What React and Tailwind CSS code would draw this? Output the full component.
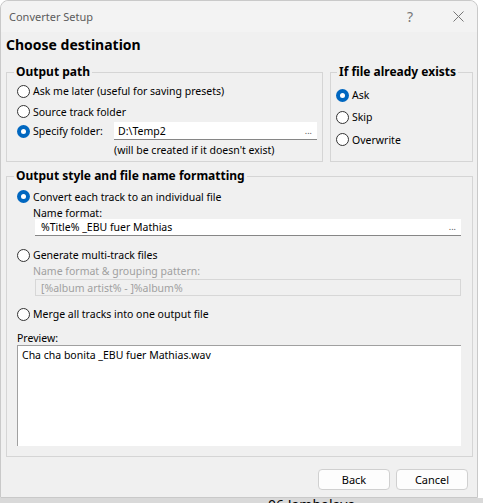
import React from "react";

function Radio({ checked }) {
  return (
    <span
      className={
        "relative inline-flex h-[13px] w-[13px] shrink-0 items-center justify-center rounded-full " +
        (checked ? "bg-[#0067c0]" : "border border-[#333] bg-white")
      }
    >
      {checked && <span className="h-[5px] w-[5px] rounded-full bg-white" />}
    </span>
  );
}

function RadioRow({ checked, children, className = "" }) {
  return (
    <div className={"flex items-center gap-[3px] " + className}>
      <Radio checked={checked} />
      <span>{children}</span>
    </div>
  );
}

export default function App() {
  return (
    <div
      className="relative h-[503px] w-[483px] overflow-hidden bg-[#ffffff] text-[10.5px] leading-[14px] text-black"
      style={{ fontFamily: '"Noto Sans", "Open Sans", sans-serif' }}
    >
      <div className="flex h-[498px] w-[478px] flex-col rounded-t-[8px] border border-[#c9c9c9] bg-[#f0f0f0]">
        {/* title bar */}
        <div className="flex h-[31px] items-center rounded-t-[8px] bg-[#f3f3f3] pl-[8px] text-[11px] text-[#5c5c5c]">
          <span>Converter Setup</span>
          <span className="ml-auto mr-[40px] text-[14px] text-[#777]">?</span>
          <svg width="11" height="11" viewBox="0 0 11 11" className="mr-[13px]">
            <path d="M0.5 0.5 L10.5 10.5 M10.5 0.5 L0.5 10.5" stroke="#777" strokeWidth="1" />
          </svg>
        </div>
        {/* header */}
        <div className="flex h-[26px] items-center pl-[5px] text-[14px] font-bold">Choose destination</div>

        <div className="mt-[5px] flex gap-[7px] pl-[5px]">
          <fieldset className="h-[99px] w-[317px] border border-[#d5d5d5] pl-[10px] pr-[5px]">
            <legend className="ml-[-3px] px-[2px] text-[12px] font-bold leading-[18px]">Output path</legend>
            <div className="flex h-[20px] items-center">
              <RadioRow>Ask me later (useful for saving presets)</RadioRow>
            </div>
            <div className="flex h-[21px] items-center">
              <RadioRow>Source track folder</RadioRow>
            </div>
            <div className="flex h-[18px] items-center">
              <RadioRow checked className="w-[97px]">Specify folder:</RadioRow>
              <div className="flex h-[18px] flex-1 items-center border-b border-[#868686] bg-white pl-[4px] pr-[5px]">
                <span>D:\Temp2</span>
                <span className="ml-auto text-[9px] text-[#555]">...</span>
              </div>
            </div>
            <div className="flex h-[20px] items-center pl-[97px]">(will be created if it doesn't exist)</div>
          </fieldset>

          <fieldset className="h-[99px] w-[143px] border border-[#d5d5d5] pl-[5px]">
            <legend className="ml-[1px] px-[2px] text-[12px] font-bold leading-[18px]">If file already exists</legend>
            <div className="mt-[3px] flex h-[22px] items-center">
              <RadioRow checked>Ask</RadioRow>
            </div>
            <div className="flex h-[22px] items-center">
              <RadioRow>Skip</RadioRow>
            </div>
            <div className="flex h-[23px] items-center">
              <RadioRow>Overwrite</RadioRow>
            </div>
          </fieldset>
        </div>

        <fieldset className="ml-[5px] mt-[5px] h-[290px] w-[467px] border border-[#d5d5d5] pl-[10px] pr-[11px]">
          <legend className="ml-[-3px] px-[2px] text-[12px] font-bold leading-[18px]">Output style and file name formatting</legend>
          <div className="flex h-[21px] items-center pt-[2px]">
            <RadioRow checked>Convert each track to an individual file</RadioRow>
          </div>
          <div className="flex h-[13px] items-center pl-[16px]">Name format:</div>
          <div className="ml-[18px] flex h-[17px] items-center border-b border-[#868686] bg-white pl-[6px] pr-[5px]">
            <span>%Title% _EBU fuer Mathias</span>
            <span className="ml-auto text-[9px] text-[#555]">...</span>
          </div>
          <div className="mt-[11px] flex h-[16px] items-center">
            <RadioRow>Generate multi-track files</RadioRow>
          </div>
          <div className="flex h-[16px] items-center pl-[16px] text-[#a0a0a0]">Name format &amp; grouping pattern:</div>
          <div className="ml-[18px] flex h-[17px] items-center border border-[#d7d7d7] bg-[#f0f0f0] pl-[5px] text-[#a0a0a0]">
            [%album artist% - ]%album%
          </div>
          <div className="mt-[10px] flex h-[16px] items-center">
            <RadioRow>Merge all tracks into one output file</RadioRow>
          </div>
          <div className="mt-[9px] flex h-[14px] items-center">Preview:</div>
          <div className="h-[101px] border-l border-t border-[#a0a0a0] bg-white pl-[4px] pt-[2px]">
            Cha cha bonita _EBU fuer Mathias.wav
          </div>
        </fieldset>

        <div className="mt-[12px] flex justify-end gap-[6px] pr-[9px]">
          <button className="h-[21px] w-[72px] rounded-[4px] border border-[#d0d0d0] bg-[#fdfdfd] text-[11px]">Back</button>
          <button className="h-[21px] w-[72px] rounded-[4px] border border-[#d0d0d0] bg-[#fdfdfd] text-[11px]">Cancel</button>
        </div>
      </div>
      <div className="h-[5px] w-full overflow-hidden bg-[#d9d9d9] pl-[268px] text-[14px] leading-[14px] text-black">06 Jambalaya</div>
    </div>
  );
}
